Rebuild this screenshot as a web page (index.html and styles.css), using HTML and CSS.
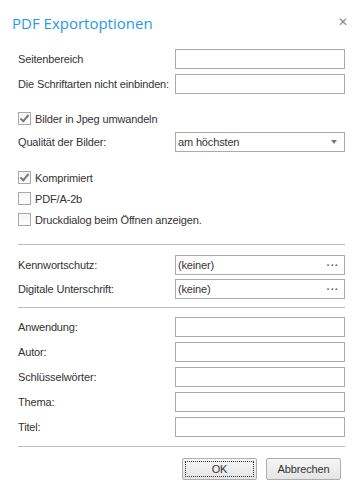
FILE: index.html
```html
<!DOCTYPE html>
<html lang="de">
<head>
  <meta charset="UTF-8" />
  <title>PDF Exportoptionen</title>
  <link rel="stylesheet" href="styles.css">
</head>
<body>
  <div class="dialog">
    <div class="header">
      <h1 class="title">PDF Exportoptionen</h1>
      <span class="close">&#x2715;</span>
    </div>

    <div class="rows">
      <label class="row"><span>Seitenbereich</span><span class="field"></span></label>
      <label class="row"><span>Die Schriftarten nicht einbinden:</span><span class="field"></span></label>
    </div>

    <div class="check first-check"><span class="box checked"></span>Bilder in Jpeg umwandeln</div>
    <label class="row quality"><span>Qualität der Bilder:</span><span class="field select">am höchsten<span class="arrow"></span></span></label>

    <div class="checks">
      <div class="check"><span class="box checked"></span>Komprimiert</div>
      <div class="check"><span class="box"></span>PDF/A-2b</div>
      <div class="check"><span class="box"></span>Druckdialog beim Öffnen anzeigen.</div>
    </div>

    <hr class="sep sep-one">

    <div class="rows tight">
      <label class="row"><span>Kennwortschutz:</span><span class="field picker">(keiner)<span class="dots">&middot;&middot;&middot;</span></span></label>
      <label class="row"><span>Digitale Unterschrift:</span><span class="field picker">(keine)<span class="dots">&middot;&middot;&middot;</span></span></label>
    </div>

    <hr class="sep sep-two">

    <div class="rows meta">
      <label class="row"><span>Anwendung:</span><span class="field"></span></label>
      <label class="row"><span>Autor:</span><span class="field"></span></label>
      <label class="row"><span>Schlüsselwörter:</span><span class="field"></span></label>
      <label class="row"><span>Thema:</span><span class="field"></span></label>
      <label class="row"><span>Titel:</span><span class="field"></span></label>
    </div>

    <hr class="sep sep-three">

    <div class="buttons">
      <button class="btn focused"><span>OK</span></button>
      <button class="btn"><span>Abbrechen</span></button>
    </div>
  </div>
</body>
</html>
```

FILE: styles.css
```css
body {
  margin: 0;
  background: #fff;
  font-family: "Liberation Sans", Arial, sans-serif;
  font-size: 11px;
  letter-spacing: -0.15px;
  color: #333;
}
.dialog {
  padding: 0 19px 0 18px;
}
.header {
  height: 49px;
  position: relative;
}
.title {
  margin: 0 0 0 -6px;
  padding-top: 12px;
  font-family: "Open Sans", sans-serif;
  font-weight: 400;
  font-size: 15px;
  line-height: 22px;
  letter-spacing: 0;
  color: #2899e0;
}
.close {
  position: absolute;
  right: -3px;
  top: 15px;
  font-family: "DejaVu Sans", sans-serif;
  font-size: 12px;
  color: #8a8a8a;
}
.rows {
  display: flex;
  flex-direction: column;
  gap: 5px;
}
.rows.tight {
  gap: 4px;
  margin-top: 10px;
}
.rows.meta {
  margin-top: 9px;
}
.row {
  display: grid;
  grid-template-columns: 157px 1fr;
  align-items: center;
  height: 20px;
  white-space: nowrap;
}
.field {
  display: flex;
  align-items: center;
  height: 20px;
  box-sizing: border-box;
  border: 1px solid #ababab;
  background: #fff;
  padding: 0 5px 0 2px;
  position: relative;
}
.select .arrow {
  margin-left: auto;
  width: 0;
  height: 0;
  border-left: 3px solid transparent;
  border-right: 3px solid transparent;
  border-top: 4px solid #777;
  margin-right: 2px;
}
.picker .dots {
  margin-left: auto;
  font-weight: bold;
  letter-spacing: 0.5px;
  color: #666;
}
.check {
  display: flex;
  align-items: center;
  height: 21px;
}
.first-check {
  margin-top: 14px;
}
.quality {
  margin-top: 3px;
}
.checks {
  margin-top: 15px;
  display: flex;
  flex-direction: column;
}
.box {
  width: 13px;
  height: 13px;
  box-sizing: border-box;
  border: 1px solid #a8a8a8;
  background: linear-gradient(#f4f4f4, #ffffff);
  margin-right: 4px;
  position: relative;
}
.box.checked::after {
  content: "";
  position: absolute;
  left: 3px;
  top: 0px;
  width: 3px;
  height: 7px;
  border-right: 2px solid #7a7a7a;
  border-bottom: 2px solid #7a7a7a;
  transform: rotate(40deg);
}
.sep {
  border: 0;
  border-top: 1px solid #bcbcbc;
  margin: 0;
}
.sep-one {
  margin-top: 14px;
}
.sep-two {
  margin-top: 8px;
}
.sep-three {
  margin-top: 9px;
}
.buttons {
  display: flex;
  justify-content: flex-end;
  gap: 9px;
  margin-top: 11px;
  padding-right: 4px;
}
.btn {
  width: 75px;
  height: 22px;
  padding: 2px;
  font-family: inherit;
  font-size: 11px;
  letter-spacing: inherit;
  color: #333;
  border: 1px solid #adadad;
  border-radius: 2px;
  background: linear-gradient(#f6f6f6, #e4e4e4);
}
.btn span {
  display: flex;
  align-items: center;
  justify-content: center;
  height: 100%;
  box-sizing: border-box;
  border: 1px dotted transparent;
}
.btn.focused span {
  border-color: #333;
}
```
